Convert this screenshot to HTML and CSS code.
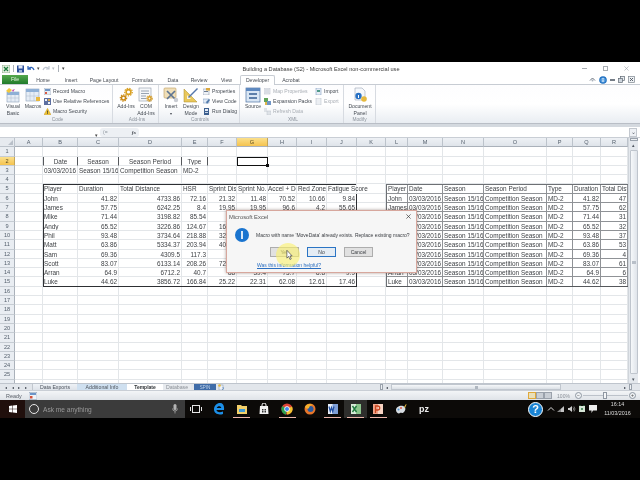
FILE: index.html
```html
<!DOCTYPE html>
<html lang="en">
<head>
<meta charset="utf-8">
<title>Building a Database (S2) - Microsoft Excel non-commercial use</title>
<link rel="stylesheet" href="styles.css">
</head>
<body>
<div class="screen">
  <div class="letterbox-top"></div>
  <div class="window">
    <div class="titlebar">
      <div class="qat">
        <svg class="ic8" viewBox="0 0 8 8"><rect width="8" height="8" fill="#e4efe0" stroke="#6f8f6a" stroke-width=".6"/><path d="M2 2l4 4M6 2L2 6" stroke="#1d7a3c" stroke-width="1.3"/></svg>
        <span class="qat-sep"></span>
        <svg class="ic8" viewBox="0 0 8 8"><rect width="7" height="7" y=".5" fill="#2c4f9a"/><rect x="1.5" y=".5" width="4" height="3" fill="#dfe6f4"/><rect x="2" y="5" width="3" height="2.5" fill="#9fb2d6"/></svg>
        <svg class="ic8" viewBox="0 0 8 8"><path d="M1 1v3h3M1.4 3.8C3 1.6 6 2 7 5" fill="none" stroke="#2d62b8" stroke-width="1.3"/></svg>
        <span class="qat-drop">▾</span>
        <svg class="ic8" viewBox="0 0 8 8"><path d="M7 1v3H4M6.6 3.8C5 1.6 2 2 1 5" fill="none" stroke="#bcc4cf" stroke-width="1.2"/></svg>
        <span class="qat-drop muted">▾</span>
        <span class="qat-sep"></span>
        <span class="qat-drop">▾</span>
      </div>
      <div class="doc-title">Building a Database (S2) - Microsoft Excel non-commercial use</div>
      <div class="win-controls">
        <span class="wc-min"></span>
        <span class="wc-max"></span>
        <svg class="wc-x" viewBox="0 0 6 6"><path d="M.5.5l5 5M5.5.5l-5 5" stroke="#9aa0a8" stroke-width=".7"/></svg>
      </div>
    </div>

    <div class="tabs">
      <div class="tab-file">File</div>
      <div class="tab w30">Home</div>
      <div class="tab w26">Insert</div>
      <div class="tab w40">Page Layout</div>
      <div class="tab w37">Formulas</div>
      <div class="tab w24">Data</div>
      <div class="tab w28">Review</div>
      <div class="tab w27">View</div>
      <div class="tab tab-active">Developer</div>
      <div class="tab w32">Acrobat</div>
      <div class="tab-tools">
        <svg class="ic7" viewBox="0 0 7 7"><path d="M1 4.5L3.5 2 6 4.5" fill="none" stroke="#6b7480" stroke-width="1"/><circle cx="3.5" cy="4.6" r="1" fill="#a9b1bb"/></svg>
        <svg class="ic8" viewBox="0 0 8 8"><circle cx="4" cy="4" r="3.8" fill="#1f6fc0"/><circle cx="4" cy="4" r="2.6" fill="#5aa0e0"/><rect x="3.5" y="3.4" width="1" height="2.6" fill="#fff"/><rect x="3.5" y="2" width="1" height="1" fill="#fff"/></svg>
        <span class="tool-min"></span>
        <svg class="ic7" viewBox="0 0 7 7"><rect x="2.5" y=".5" width="4" height="4" fill="#e8ecf0" stroke="#5f6873" stroke-width=".7"/><rect x=".5" y="2.5" width="4" height="4" fill="#cfd6de" stroke="#5f6873" stroke-width=".7"/></svg>
        <svg class="ic7" viewBox="0 0 7 7"><rect x=".5" y=".5" width="6" height="6" fill="#eef1f4" stroke="#7c858f" stroke-width=".7"/><path d="M2 2l3 3M5 2L2 5" stroke="#4f5761" stroke-width=".9"/></svg>
      </div>
    </div>

    <div class="ribbon">
      <section class="group g-code">
        <div class="group-body">
          <div class="large">
            <svg class="ic-l" viewBox="0 0 16 16"><rect x="2" y="5" width="12" height="10" fill="#e6edf6" stroke="#8ca0ba" stroke-width=".6"/><rect x="2" y="5" width="12" height="3" fill="#8fb0d6"/><path d="M6 8v7M10 8v7M2 11h12" stroke="#a9b8ca" stroke-width=".5"/><path d="M4 1l3 2-3 3-3-2z" fill="#f1c83e"/><path d="M7 3l3-1-2 3z" fill="#c24bb0"/></svg>
            <span>Visual<br>Basic</span>
          </div>
          <div class="large">
            <svg class="ic-l" viewBox="0 0 16 16"><rect x="1" y="2" width="13" height="12" fill="#e6edf6" stroke="#8ca0ba" stroke-width=".6"/><rect x="1" y="2" width="13" height="3" fill="#8fb0d6"/><path d="M5 5v9M9 5v9M1 9h13" stroke="#a9b8ca" stroke-width=".5"/><path d="M11 10h4v4h-4z" fill="#e9b83c"/></svg>
            <span>Macros</span>
          </div>
          <div class="small-col">
            <div class="small"><svg class="ic7" viewBox="0 0 7 7"><rect width="7" height="7" fill="#e9eef5" stroke="#8596ad" stroke-width=".5"/><rect x="1" y="1" width="5" height="2" fill="#6f94c4"/><rect x="1" y="4" width="2" height="2" fill="#d85a44"/></svg><span>Record Macro</span></div>
            <div class="small"><svg class="ic7" viewBox="0 0 7 7"><rect width="7" height="7" fill="#5d6fa0"/><path d="M1 1h2v2H1zM4 4h2v2H4z" fill="#f0f3f8"/><path d="M4 1h2v2H4z" fill="#d9a54a"/></svg><span>Use Relative References</span></div>
            <div class="small"><svg class="ic7" viewBox="0 0 7 7"><path d="M3.5.3L7 6.8H0z" fill="#f0c32f" stroke="#b98b14" stroke-width=".4"/><rect x="3.1" y="2.6" width=".8" height="2.2" fill="#333"/><rect x="3.1" y="5.2" width=".8" height=".8" fill="#333"/></svg><span>Macro Security</span></div>
          </div>
        </div>
        <div class="group-label">Code</div>
      </section>

      <section class="group g-addins">
        <div class="group-body">
          <div class="large">
            <svg class="ic-l" viewBox="0 0 16 16"><circle cx="10.5" cy="5" r="2.4" fill="none" stroke="#d9a021" stroke-width="1.6"/><circle cx="10.5" cy="5" r="3.8" fill="none" stroke="#d9a021" stroke-width="1.2" stroke-dasharray="1.4 1.2"/><circle cx="5.5" cy="11" r="2" fill="none" stroke="#c8860f" stroke-width="1.5"/><circle cx="5.500" cy="11" r="3.2" fill="none" stroke="#c8860f" stroke-width="1.100" stroke-dasharray="1.300 1.100"/></svg>
            <span>Add-Ins</span>
          </div>
          <div class="large">
            <svg class="ic-l" viewBox="0 0 16 16"><rect x="1" y="1" width="12" height="13" fill="#f5f7fa" stroke="#8e99a8" stroke-width=".6"/><path d="M3 4h8M3 6.5h8M3 9h5M3 11.5h5" stroke="#7f8da0" stroke-width=".8"/><circle cx="11.5" cy="11.5" r="1.700" fill="none" stroke="#d79a1c" stroke-width="1.400"/><circle cx="11.500" cy="11.500" r="3" fill="none" stroke="#d79a1c" stroke-width="1" stroke-dasharray="1.200 1"/></svg>
            <span>COM<br>Add-Ins</span>
          </div>
        </div>
        <div class="group-label">Add-Ins</div>
      </section>

      <section class="group g-controls">
        <div class="group-body">
          <div class="large">
            <svg class="ic-l" viewBox="0 0 16 16"><rect x="1" y="1" width="12" height="10" rx="1" fill="#f0dfb8" stroke="#bd9c5c" stroke-width=".6"/><path d="M4 12l8-8M12 12L4 4" stroke="#5e7592" stroke-width="1.7"/><circle cx="13" cy="13" r="2.2" fill="#c9ccd2"/></svg>
            <span>Insert<br><small>▾</small></span>
          </div>
          <div class="large">
            <svg class="ic-l" viewBox="0 0 16 16"><path d="M1 15V2l13 13z" fill="#e9c75a" stroke="#a98a2a" stroke-width=".5"/><path d="M4 12V8l4 4z" fill="#f7f3e4"/><path d="M5 10L14 1l1 1-9 9z" fill="#5577aa"/></svg>
            <span>Design<br>Mode</span>
          </div>
          <div class="small-col">
            <div class="small"><svg class="ic7" viewBox="0 0 7 7"><rect y="1" width="6" height="6" fill="#eef1f6" stroke="#7e8da3" stroke-width=".5"/><rect x="1" y="3" width="4" height="1" fill="#6a7b92"/><path d="M3 0h4v2.500H3z" fill="#d9a63c"/></svg><span>Properties</span></div>
            <div class="small"><svg class="ic7" viewBox="0 0 7 7"><rect y="1" width="6" height="4" fill="#dfe9f5" stroke="#6f8fb8" stroke-width=".5"/><path d="M3 4l3-3 1 1-3 4z" fill="#4f78aa"/></svg><span>View Code</span></div>
            <div class="small"><svg class="ic7" viewBox="0 0 7 7"><rect x="1" width="5" height="7" fill="#3c5f8f"/><rect x="2" y="1" width="3" height="2" fill="#e4ecf6"/><rect x="2" y="4" width="3" height="1" fill="#c7d5e6"/></svg><span>Run Dialog</span></div>
          </div>
        </div>
        <div class="group-label">Controls</div>
      </section>

      <section class="group g-xml">
        <div class="group-body">
          <div class="large">
            <svg class="ic-l" viewBox="0 0 16 16"><rect x="1" y="1" width="14" height="14" fill="#d9e6f4" stroke="#4f73a3" stroke-width=".7"/><rect x="1" y="1" width="14" height="3" fill="#5d88bf"/><rect x="4" y="6" width="8" height="2" fill="#5d7faa"/><rect x="4" y="10" width="8" height="2" fill="#5d7faa"/></svg>
            <span>Source</span>
          </div>
          <div class="small-col col-xml">
            <div class="small off"><svg class="ic7" viewBox="0 0 7 7"><rect width="6" height="6" fill="#e6e9ee" stroke="#b6bdc7" stroke-width=".5"/><path d="M1 2h4M1 4h4" stroke="#bcc3cc" stroke-width=".6"/></svg><span>Map Properties</span></div>
            <div class="small"><svg class="ic7" viewBox="0 0 7 7"><rect width="4" height="4" fill="#5fa35a"/><rect x="3" y="3" width="4" height="4" fill="#6f95c6"/><rect x="1" y="4" width="2" height="3" fill="#e0b64a"/></svg><span>Expansion Packs</span></div>
            <div class="small off"><svg class="ic7" viewBox="0 0 7 7"><path d="M0 1h3M0 3h3" stroke="#b9c0c9" stroke-width=".8"/><rect x="3" y="3" width="4" height="4" fill="#dfe3e8" stroke="#bac1ca" stroke-width=".5"/></svg><span>Refresh Data</span></div>
          </div>
          <div class="small-col">
            <div class="small"><svg class="ic7" viewBox="0 0 7 7"><rect x="1" width="5" height="7" fill="#e8eef6" stroke="#6f8fb8" stroke-width=".5"/><path d="M2 2h3v2H2z" fill="#4f9a8a"/></svg><span>Import</span></div>
            <div class="small off"><svg class="ic7" viewBox="0 0 7 7"><rect x="1" width="5" height="7" fill="#eceff3" stroke="#b5bcc6" stroke-width=".5"/></svg><span>Export</span></div>
          </div>
        </div>
        <div class="group-label">XML</div>
      </section>

      <section class="group g-modify">
        <div class="group-body">
          <div class="large">
            <svg class="ic-l" viewBox="0 0 16 16"><path d="M3 1h7l3 3v9H3z" fill="#f6f8fb" stroke="#9aa5b5" stroke-width=".6"/><circle cx="6.500" cy="9" r="3.200" fill="#2a72c4"/><rect x="6" y="8" width="1" height="3" fill="#fff"/><circle cx="12" cy="12" r="2.800" fill="#e6b93e"/></svg>
            <span>Document<br>Panel</span>
          </div>
        </div>
        <div class="group-label">Modify</div>
      </section>
    </div>

    <div class="ribbon-gap"></div>

    <div class="formula-bar">
      <div class="name-box"><span class="nb-drop">▾</span></div>
      <div class="fx-box"><span class="fx-paren">(=</span><span class="fx">fx</span></div>
      <div class="fb-expand">⌄</div>
    </div>

    <div class="sheet-area">
      <div class="sheet">
        <span class="corner"><svg class="corner-mark" viewBox="0 0 6 6"><path d="M6 0v6H0z" fill="#b9c0c9"/></svg></span><span class="h">A</span><span class="h">B</span><span class="h">C</span><span class="h">D</span><span class="h">E</span><span class="h">F</span><span class="h sel">G</span><span class="h">H</span><span class="h">I</span><span class="h">J</span><span class="h">K</span><span class="h">L</span><span class="h">M</span><span class="h">N</span><span class="h">O</span><span class="h">P</span><span class="h">Q</span><span class="h">R</span>

        <span class="rh">1</span><span></span><span></span><span></span><span></span><span></span><span></span><span></span><span></span><span></span><span></span><span></span><span></span><span></span><span></span><span></span><span></span><span></span><span></span>

        <span class="rh sel">2</span><span></span><span class="ctr bl br">Date</span><span class="ctr br">Season</span><span class="ctr br">Season Period</span><span class="ctr br">Type</span><span></span><span></span><span></span><span></span><span></span><span></span><span></span><span></span><span></span><span></span><span></span><span></span><span></span>

        <span class="rh">3</span><span></span><span>03/03/2016</span><span>Season 15/16</span><span>Competition Season</span><span>MD-2</span><span></span><span></span><span></span><span></span><span></span><span></span><span></span><span></span><span></span><span></span><span></span><span></span><span></span>

        <span class="rh">4</span><span></span><span></span><span></span><span></span><span></span><span></span><span></span><span></span><span></span><span></span><span></span><span></span><span></span><span></span><span></span><span></span><span></span><span></span>

        <span class="rh">5</span><span></span><span>Player</span><span>Duration</span><span>Total Distance</span><span>HSR</span><span>Sprint Dis</span><span>Sprint No.</span><span class="tight">Accel + De</span><span>Red Zone</span><span class="spill">Fatigue Score</span><span></span><span class="t tl">Player</span><span class="t">Date</span><span class="t">Season</span><span class="t">Season Period</span><span class="t">Type</span><span class="t">Duration</span><span class="t">Total Dist</span>

        <span class="rh">6</span><span></span><span>John</span><span class="n">41.82</span><span class="n">4733.86</span><span class="n">72.16</span><span class="n">21.32</span><span class="n">11.48</span><span class="n">70.52</span><span class="n">10.66</span><span class="n">9.84</span><span></span><span class="t tl">John</span><span class="t n">03/03/2016</span><span class="t">Season 15/16</span><span class="t">Competition Season</span><span class="t">MD-2</span><span class="t n">41.82</span><span class="t n">47</span>

        <span class="rh">7</span><span></span><span>James</span><span class="n">57.75</span><span class="n">6242.25</span><span class="n">8.4</span><span class="n">19.95</span><span class="n">19.95</span><span class="n">96.6</span><span class="n">4.2</span><span class="n">55.65</span><span></span><span class="t tl">James</span><span class="t n">03/03/2016</span><span class="t">Season 15/16</span><span class="t">Competition Season</span><span class="t">MD-2</span><span class="t n">57.75</span><span class="t n">62</span>

        <span class="rh">8</span><span></span><span>Mike</span><span class="n">71.44</span><span class="n">3198.82</span><span class="n">85.54</span><span></span><span></span><span></span><span></span><span></span><span></span><span class="t tl">Mike</span><span class="t n">03/03/2016</span><span class="t">Season 15/16</span><span class="t">Competition Season</span><span class="t">MD-2</span><span class="t n">71.44</span><span class="t n">31</span>

        <span class="rh">9</span><span></span><span>Andy</span><span class="n">65.52</span><span class="n">3226.86</span><span class="n">124.67</span><span class="n">16.42</span><span></span><span></span><span></span><span></span><span></span><span class="t tl">Andy</span><span class="t n">03/03/2016</span><span class="t">Season 15/16</span><span class="t">Competition Season</span><span class="t">MD-2</span><span class="t n">65.52</span><span class="t n">32</span>

        <span class="rh">10</span><span></span><span>Phil</span><span class="n">93.48</span><span class="n">3734.64</span><span class="n">218.88</span><span class="n">32.85</span><span></span><span></span><span></span><span></span><span></span><span class="t tl">Phil</span><span class="t n">03/03/2016</span><span class="t">Season 15/16</span><span class="t">Competition Season</span><span class="t">MD-2</span><span class="t n">93.48</span><span class="t n">37</span>

        <span class="rh">11</span><span></span><span>Matt</span><span class="n">63.86</span><span class="n">5334.37</span><span class="n">203.94</span><span class="n">40.78</span><span></span><span></span><span></span><span></span><span></span><span class="t tl">Matt</span><span class="t n">03/03/2016</span><span class="t">Season 15/16</span><span class="t">Competition Season</span><span class="t">MD-2</span><span class="t n">63.86</span><span class="t n">53</span>

        <span class="rh">12</span><span></span><span>Sam</span><span class="n">69.36</span><span class="n">4309.5</span><span class="n">117.3</span><span></span><span></span><span></span><span></span><span></span><span></span><span class="t tl">Sam</span><span class="t n">03/03/2016</span><span class="t">Season 15/16</span><span class="t">Competition Season</span><span class="t">MD-2</span><span class="t n">69.36</span><span class="t n">4</span>

        <span class="rh">13</span><span></span><span>Scott</span><span class="n">83.07</span><span class="n">6133.14</span><span class="n">208.26</span><span class="n">72.45</span><span></span><span></span><span></span><span></span><span></span><span class="t tl">Scott</span><span class="t n">03/03/2016</span><span class="t">Season 15/16</span><span class="t">Competition Season</span><span class="t">MD-2</span><span class="t n">83.07</span><span class="t n">61</span>

        <span class="rh">14</span><span></span><span>Arran</span><span class="n">64.9</span><span class="n">6712.2</span><span class="n">40.7</span><span class="n">88</span><span class="n">39.4</span><span class="n">73.7</span><span class="n">8.8</span><span class="n">9.9</span><span></span><span class="t tl">Arran</span><span class="t n">03/03/2016</span><span class="t">Season 15/16</span><span class="t">Competition Season</span><span class="t">MD-2</span><span class="t n">64.9</span><span class="t n">6</span>

        <span class="rh">15</span><span></span><span>Luke</span><span class="n">44.62</span><span class="n">3856.72</span><span class="n">166.84</span><span class="n">25.22</span><span class="n">22.31</span><span class="n">62.08</span><span class="n">12.61</span><span class="n">17.46</span><span></span><span class="t tl">Luke</span><span class="t n">03/03/2016</span><span class="t">Season 15/16</span><span class="t">Competition Season</span><span class="t">MD-2</span><span class="t n">44.62</span><span class="t n">38</span>

        <span class="rh">16</span><span></span><span></span><span></span><span></span><span></span><span></span><span></span><span></span><span></span><span></span><span></span><span></span><span></span><span></span><span></span><span></span><span></span><span></span>
        <span class="rh">17</span><span></span><span></span><span></span><span></span><span></span><span></span><span></span><span></span><span></span><span></span><span></span><span></span><span></span><span></span><span></span><span></span><span></span><span></span>
        <span class="rh">18</span><span></span><span></span><span></span><span></span><span></span><span></span><span></span><span></span><span></span><span></span><span></span><span></span><span></span><span></span><span></span><span></span><span></span><span></span>
        <span class="rh">19</span><span></span><span></span><span></span><span></span><span></span><span></span><span></span><span></span><span></span><span></span><span></span><span></span><span></span><span></span><span></span><span></span><span></span><span></span>
        <span class="rh">20</span><span></span><span></span><span></span><span></span><span></span><span></span><span></span><span></span><span></span><span></span><span></span><span></span><span></span><span></span><span></span><span></span><span></span><span></span>
        <span class="rh">21</span><span></span><span></span><span></span><span></span><span></span><span></span><span></span><span></span><span></span><span></span><span></span><span></span><span></span><span></span><span></span><span></span><span></span><span></span>
        <span class="rh">22</span><span></span><span></span><span></span><span></span><span></span><span></span><span></span><span></span><span></span><span></span><span></span><span></span><span></span><span></span><span></span><span></span><span></span><span></span>
        <span class="rh">23</span><span></span><span></span><span></span><span></span><span></span><span></span><span></span><span></span><span></span><span></span><span></span><span></span><span></span><span></span><span></span><span></span><span></span><span></span>
        <span class="rh">24</span><span></span><span></span><span></span><span></span><span></span><span></span><span></span><span></span><span></span><span></span><span></span><span></span><span></span><span></span><span></span><span></span><span></span><span></span>
        <span class="rh">25</span><span></span><span></span><span></span><span></span><span></span><span></span><span></span><span></span><span></span><span></span><span></span><span></span><span></span><span></span><span></span><span></span><span></span><span></span>
        <span class="rh"></span><span></span><span></span><span></span><span></span><span></span><span></span><span></span><span></span><span></span><span></span><span></span><span></span><span></span><span></span><span></span><span></span><span></span><span></span>

        <div class="box-left"></div>
        <div class="box-right"></div>
        <div class="selected"><span class="handle"></span></div>
      </div>
      <div class="vscroll">
        <span class="split-v"></span>
        <span class="arrow">▴</span>
        <span class="v-thumb"><span class="grip"></span></span>
        <span class="arrow">▾</span>
      </div>
    </div>

    <div class="sheet-tabs">
      <div class="tab-nav"><span>◂</span><span>◂</span><span>▸</span><span>▸</span></div>
      <div class="stab s1">Data Exports</div>
      <div class="stab s2">Additional Info</div>
      <div class="stab s3">Template</div>
      <div class="stab s4">Database</div>
      <div class="stab s5">SPIN</div>
      <svg class="ic7 new-sheet" viewBox="0 0 7 7"><rect x="1" y="1" width="4" height="5" fill="#eef2f7" stroke="#7f93ad" stroke-width=".5"/><circle cx="1.500" cy="1.500" r="1.300" fill="#e6b93e"/><path d="M5 3a2 2 0 0 1-1 3" fill="none" stroke="#5a86bd" stroke-width=".8"/></svg>
      <div class="hscroll">
        <span class="split-h"></span>
        <span class="arrow-h">◂</span>
        <span class="h-thumb"><span class="grip-h"></span></span>
        <span class="arrow-h">▸</span>
        <span class="split-h"></span>
      </div>
    </div>

    <div class="status">
      <span class="ready">Ready</span>
      <svg class="macro-rec" viewBox="0 0 8 8"><rect width="8" height="7" y=".5" fill="#eef2f7" stroke="#7f93ad" stroke-width=".5"/><rect x="1" y="1" width="6" height="2" fill="#6d95c8"/><rect x="1" y="4" width="2.500" height="2.500" fill="#d2533d"/></svg>
      <div class="status-right">
        <span class="view view-on"></span>
        <span class="view"></span>
        <span class="view"></span>
        <span class="zoom-pct">100%</span>
        <span class="zoom-btn">−</span>
        <span class="slider"><span class="slider-thumb"></span></span>
        <span class="zoom-btn">+</span>
      </div>
    </div>
  </div>

  <div class="taskbar">
    <div class="start">
      <svg class="win-logo" viewBox="0 0 8 8"><path d="M0 1l3.500-.5v3.200H0zM4 .4L8 0v3.700H4zM0 4.200h3.500v3.200L0 7zM4 4.200h4V8l-4-.5z" fill="#fff"/></svg>
    </div>
    <div class="search">
      <span class="cortana"></span>
      <span class="search-text">Ask me anything</span>
      <svg class="mic" viewBox="0 0 6 10"><rect x="1.500" width="3" height="6" rx="1.500" fill="#b4b4b4"/><path d="M.5 4.500a2.500 2.500 0 0 0 5 0M3 7v2.500" fill="none" stroke="#b4b4b4" stroke-width=".7"/></svg>
    </div>
    <div class="task">
      <svg class="t-ic" viewBox="0 0 12 12"><rect x="2.500" y="2.500" width="7" height="7" fill="none" stroke="#e6e6e6"/><path d="M.5 4v4M11.500 4v4" stroke="#e6e6e6"/></svg>
    </div>
    <div class="task">
      <svg class="t-ic" viewBox="0 0 12 12"><path d="M11 7H3.500c.2 2 3 3 6.500 1.500v2.400C5.500 12.500 1 10.500 1 6.500 1 2.500 4 0 7 0c3 0 4.500 2.500 4 7zM3.700 5h4.600C8 2.500 4.500 2.500 3.700 5z" fill="#1c8fe8"/></svg>
    </div>
    <div class="task on">
      <svg class="t-ic" viewBox="0 0 12 12"><path d="M1 2h4l1 1h5v8H1z" fill="#f3d06a"/><rect x="3" y="6" width="6" height="3" fill="#3f9ad6"/></svg>
    </div>
    <div class="task">
      <svg class="t-ic" viewBox="0 0 12 12"><path d="M2 3h8l.5 8h-9z" fill="#f2f2f2"/><path d="M4 4V2a2 2 0 0 1 4 0v2" fill="none" stroke="#f2f2f2"/><path d="M4 6h1.500v1.500H4zM6.500 6H8v1.500H6.500zM4 8h1.500v1.500H4zM6.500 8H8v1.500H6.500z" fill="#333"/></svg>
    </div>
    <div class="task on">
      <svg class="t-ic" viewBox="0 0 12 12"><circle cx="6" cy="6" r="5.500" fill="#dc4437"/><path d="M6 6L11 3.500A5.500 5.500 0 0 1 6 11.500z" fill="#f3c531"/><path d="M6 6l-1 5.500A5.500 5.500 0 0 1 1.300 3z" fill="#2f9e4f"/><circle cx="6" cy="6" r="2.700" fill="#fff"/><circle cx="6" cy="6" r="2" fill="#3f85ee"/></svg>
    </div>
    <div class="task">
      <svg class="t-ic" viewBox="0 0 12 12"><circle cx="6" cy="6" r="5.500" fill="#e8762a"/><circle cx="6.500" cy="6" r="3" fill="#2a5a9e"/><path d="M1 4c1-3 5-4 8-2-2 0-4 1-4 3-1 1-3 1-4-1z" fill="#f4b02d"/></svg>
    </div>
    <div class="task on">
      <svg class="t-ic" viewBox="0 0 12 12"><rect x="1" y="1" width="10" height="10" fill="#e8eef8"/><rect x="5.500" y="1" width="5.500" height="10" fill="#7f9fd6"/><path d="M2 3.500l1.300 5 1.200-4 1.200 4 1.300-5" fill="none" stroke="#1f4ea3" stroke-width="1.200"/></svg>
    </div>
    <div class="task on active">
      <svg class="t-ic" viewBox="0 0 12 12"><rect x="1" y="1" width="10" height="10" fill="#d9ecd9"/><rect x="6" y="1" width="5" height="10" fill="#8cc58c"/><path d="M2.500 3l4 6M6.500 3l-4 6" stroke="#1f7a3e" stroke-width="1.400"/></svg>
    </div>
    <div class="task on">
      <svg class="t-ic" viewBox="0 0 12 12"><rect x="1" y="1" width="10" height="10" fill="#f0a58a"/><rect x="6" y="1" width="5" height="10" fill="#f7d3c2"/><path d="M3.500 10V3h2.200a2 2 0 0 1 0 4H3.500" fill="none" stroke="#c9451f" stroke-width="1.300"/></svg>
    </div>
    <div class="task">
      <svg class="t-ic" viewBox="0 0 12 12"><path d="M1 7c0-3 4-5 7-4s3 4 1 6-3 0-4 1-4 0-4-3z" fill="#d8dde2"/><circle cx="3.500" cy="6.500" r="1" fill="#4f97d6"/><circle cx="6" cy="5" r="1" fill="#dd5a4a"/><path d="M9 4l2-3 .5.500L10 5z" fill="#e3b53c"/></svg>
    </div>
    <div class="task pz">pz</div>
    <div class="tray">
      <span class="help">?</span>
      <svg class="t-small" viewBox="0 0 8 8"><path d="M1 5.500L4 2.500l3 3" fill="none" stroke="#d8d8d8"/></svg>
      <svg class="t-small" viewBox="0 0 8 8"><path d="M0 7l7-6v6z" fill="#8b8b8b"/><path d="M4 7V4l3-2.500V7z" fill="#c4c4c4"/></svg>
      <svg class="t-small" viewBox="0 0 8 8"><path d="M0 3h1.500L4 1v6L1.500 5H0z" fill="#d0d0d0"/><path d="M5 2.500a2 2 0 0 1 0 3M6 1.500a4 4 0 0 1 0 5" fill="none" stroke="#c0c0c0" stroke-width=".6"/></svg>
      <svg class="t-small" viewBox="0 0 8 8"><rect x="1" y="1" width="6" height="6" fill="#d7e6d7"/><path d="M2 1V0M6 1V0M3 4h2M4 3v2" stroke="#2e7a45"/></svg>
      <svg class="t-small" viewBox="0 0 8 8"><path d="M0 0h8v5.500H4L2.500 8V5.500H0z" fill="#eee"/></svg>
      <div class="clock">16:14<br>11/03/2016</div>
    </div>
  </div>

  <div class="dialog">
    <div class="dlg-title"><span>Microsoft Excel</span><svg class="dlg-x" viewBox="0 0 6 6"><path d="M.5.5l5 5M5.500.5l-5 5" stroke="#333" stroke-width=".8"/></svg></div>
    <div class="dlg-msg">
      <span class="info-ic"></span>
      <span class="dlg-text">Macro with name 'MoveData' already exists. Replace existing macro?</span>
    </div>
    <div class="dlg-btns">
      <span class="btn btn-yes">Yes</span>
      <span class="btn btn-no">No</span>
      <span class="btn">Cancel</span>
    </div>
    <div class="dlg-link">Was this information helpful?</div>
    <span class="spot"></span>
    <svg class="cursor" viewBox="0 0 8 12"><path d="M1 0v9l2-2 1.500 3.500 1.500-.6L4.500 6.500H7z" fill="#fff" stroke="#333" stroke-width=".7"/></svg>
  </div>
</div>
</body>
</html>
```

FILE: styles.css
```css
* { box-sizing: border-box; }
html, body { margin: 0; padding: 0; background: #000; }
body { font-family: "Liberation Sans", Arial, sans-serif; color: #3d3f44; }

.screen { position: relative; width: 640px; height: 480px; overflow: hidden; background: #000; display: flex; flex-direction: column; }
.letterbox-top { height: 62px; flex: none; }

.window { height: 338px; flex: none; background: #fff; display: flex; flex-direction: column; filter: blur(.3px); }

/* title bar */
.titlebar { height: 13px; flex: none; display: grid; grid-template-columns: 1fr auto 1fr; align-items: center; padding: 0 0 0 2px; background: #fff; }
.qat { display: flex; align-items: center; gap: 2px; }
.qat-sep { width: 1px; height: 7px; background: #aab0b8; margin: 0 1px; }
.qat-drop { font-size: 5px; color: #444; line-height: 1; }
.qat-drop.muted { color: #b9bec5; }
.ic8 { width: 8px; height: 8px; flex: none; }
.ic7 { width: 7px; height: 7px; flex: none; }
.doc-title { font-size: 5.6px; color: #3a3a3a; white-space: nowrap; }
.win-controls { display: flex; justify-content: flex-end; align-items: center; gap: 16px; padding-right: 11px; }
.wc-min { width: 5px; height: 1px; background: #a8adb3; }
.wc-max { width: 5px; height: 5px; border: 1px solid #a8adb3; }
.wc-x { width: 5px; height: 5px; }

/* tabs */
.tabs { height: 10px; flex: none; display: flex; align-items: stretch; font-size: 5.1px; padding-left: 2px; border-bottom: 1px solid #c7ccd3; color: #454a52; }
.tab-file { width: 26px; background: linear-gradient(#55a84d, #1f7a2a); color: #e9f5e6; text-align: center; line-height: 9px; }
.tab { text-align: center; line-height: 10px; white-space: nowrap; }
.w30 { width: 30px; } .w26 { width: 26px; } .w40 { width: 40px; } .w37 { width: 37px; }
.w24 { width: 24px; } .w28 { width: 28px; } .w27 { width: 27px; } .w32 { width: 32px; }
.tab-active { width: 35px; background: #fff; border: 1px solid #c7ccd3; border-bottom: 0; height: 10px; border-radius: 2px 2px 0 0; line-height: 9px; }
.tab-tools { margin-left: auto; display: flex; align-items: center; gap: 3px; padding-right: 5px; }
.tool-min { width: 5px; height: 2px; background: #fff; border: 1px solid #757d87; }

/* ribbon */
.ribbon { height: 39px; flex: none; display: flex; background: linear-gradient(#fdfdfe, #fff 50%, #e9edf2); border-bottom: 1px solid #b9bec6; font-size: 5.1px; color: #444a52; }
.group { display: flex; flex-direction: column; border-right: 1px solid #d7dbe1; height: 100%; }
.group-body { flex: 1; display: flex; min-height: 0; }
.group-label { height: 7px; flex: none; text-align: center; font-size: 4.8px; line-height: 7px; color: #8b929b; }
.g-code { width: 113px; padding-left: 3px; }
.g-addins { width: 46px; padding-left: 3px; }
.g-controls { width: 81px; padding-left: 2px; }
.g-xml { width: 104px; padding-left: 3px; }
.g-modify { width: 32px; }
.large { width: 20px; flex: none; display: flex; flex-direction: column; align-items: center; text-align: center; line-height: 7px; padding-top: 2px; }
.g-modify .large { width: 32px; }
.ic-l { width: 16px; height: 16px; flex: none; }
.large > span { white-space: nowrap; }
.large small { font-size: 4px; }
.small-col { display: flex; flex-direction: column; padding: 1px 0 0 1px; }
.g-controls .small-col { padding-left: 2px; }
.col-xml { width: 51px; flex: none; }
.small { height: 10px; display: flex; align-items: center; gap: 2px; white-space: nowrap; }
.off { color: #a9aeb5; }

.ribbon-gap { height: 3px; flex: none; background: #d4d9df; }

/* formula bar */
.formula-bar { height: 11px; flex: none; display: flex; align-items: center; background: #fff; border-bottom: 1px solid #c9ced5; }
.name-box { width: 100px; flex: none; text-align: right; padding-right: 2px; }
.nb-drop { font-size: 5px; color: #444; }
.fx-box { width: 39px; height: 9px; flex: none; display: flex; justify-content: space-between; align-items: center; background: #edf0f4; border-radius: 3px; font-size: 5px; padding: 0 3px 0 3px; color: #8d949d; }
.fx { font-family: "Liberation Serif", serif; font-style: italic; font-weight: bold; color: #3a3f46; }
.fb-expand { margin-left: auto; width: 8px; height: 9px; margin-right: 3px; font-size: 6px; line-height: 7px; text-align: center; color: #5a6069; background: #eef1f5; border: 1px solid #c3c8cf; }

/* sheet */
.sheet-area { height: 245px; flex: none; display: flex; }
.sheet { position: relative; width: 628px; flex: none; height: 100%; overflow: hidden; display: grid; grid-template-columns: 15px 28px 35px 41px 63px 26px 29px 31px 29px 30px 30px 29px 22px 35px 41px 63px 26px 28px 27px; grid-auto-rows: 9.3px; font-size: 6.4px; line-height: 9.3px; color: #3f4246; }
.sheet > span { border-right: 1px solid #e3e6e9; border-bottom: 1px solid #e3e6e9; padding: 0 1px; white-space: nowrap; overflow: hidden; }
.sheet > .tight { padding: 0; }
.sheet > .corner { background: #e6eaef; position: relative; border-color: #bcc3cb; }
.corner-mark { position: absolute; right: 1px; bottom: 1px; width: 5px; height: 5px; }
.sheet > .h { background: linear-gradient(#eef1f5, #dfe4ea); text-align: center; color: #55606d; border-right-color: #bcc3cb; border-bottom-color: #aab1ba; font-size: 5.6px; }
.sheet > .rh { background: #e9edf2; text-align: center; color: #55606d; border-right-color: #aab1ba; border-bottom-color: #c6ccd3; font-size: 5.6px; padding: 0; }
.sheet > .sel { background: linear-gradient(#fbe08c, #f5c34f); color: #5a4a20; border-right-color: #c3a558; }
.sheet > .n { text-align: right; }
.sheet > .ctr { text-align: center; }
.sheet > .bl { border-left: 1px solid #55585c; }
.sheet > .br { border-right: 1px solid #55585c; }
.sheet > .spill { overflow: visible; position: relative; z-index: 1; }
.sheet > .t { border-color: #8f9296; }
.sheet > .tl { border-left: 1px solid #6d7074; }
.box-left { position: absolute; grid-column: 3 / 12; grid-row: 6 / 17; inset: 0; border: 1.5px solid #2d2f33; pointer-events: none; }
.box-right { position: absolute; grid-column: 13 / 20; grid-row: 6 / 17; inset: 0; border-top: 1px solid #6d7074; border-left: 1px solid #6d7074; border-bottom: 1px solid #55585c; pointer-events: none; }
.selected { position: absolute; grid-column: 8 / 9; grid-row: 3 / 4; inset: 0; border: 1.5px solid #111; }
.handle { position: absolute; right: -2px; bottom: -2px; width: 3px; height: 3px; background: #111; }

.vscroll { width: 10px; flex: none; height: 100%; background: #e4e8ed; display: flex; flex-direction: column; align-items: center; border-left: 1px solid #d0d5db; }
.split-v { width: 8px; height: 3px; flex: none; background: #eef1f4; border: 1px solid #9aa2ac; }
.arrow { height: 8px; flex: none; font-size: 5px; line-height: 8px; color: #4f5660; }
.v-thumb { flex: 1; width: 8px; margin: 1px 0; background: linear-gradient(90deg, #f6f8fa, #dfe4ea); border: 1px solid #bfc5cd; display: flex; align-items: center; justify-content: center; border-radius: 1px; }
.grip { width: 4px; height: 3px; background: #b8bfc8; }

/* sheet tabs */
.sheet-tabs { height: 7px; flex: none; display: flex; align-items: stretch; background: #e2e6eb; font-size: 5.2px; line-height: 7px; color: #4c535c; border-top: 1px solid #bfc5cd; }
.tab-nav { width: 33px; flex: none; display: flex; justify-content: space-around; padding: 0 3px; font-size: 4px; color: #333a44; border-right: 1px solid #c2c7ce; }
.stab { white-space: nowrap; text-align: center; flex: none; }
.s1 { width: 44px; background: linear-gradient(#eef2f6, #dee3e9); }
.s2 { width: 50px; background: #cfe0f0; }
.s3 { width: 36px; background: #fff; color: #2e3236; font-weight: bold; font-size: 5px; }
.s4 { width: 28px; color: #8b9097; background: #e7eaee; }
.s5 { width: 22px; margin-left: 3px; background: #3f6ca8; color: #c3d5ea; font-size: 4.5px; }
.new-sheet { margin: 0 0 0 2px; align-self: center; }
.hscroll { margin-left: auto; width: 260px; flex: none; display: flex; align-items: stretch; padding-right: 3px; }
.split-h { width: 3px; flex: none; background: #eef1f4; border: 1px solid #9aa2ac; }
.arrow-h { width: 8px; flex: none; text-align: center; font-size: 4px; color: #333a44; }
.h-thumb { width: 170px; flex: none; background: linear-gradient(#f5f7f9, #dbe0e6); border: 1px solid #c0c6ce; display: flex; align-items: center; justify-content: center; margin-right: 60px; }
.grip-h { width: 3px; height: 3px; background: #b0b7c0; }

/* status bar */
.status { flex: 1; display: flex; align-items: center; background: linear-gradient(#f3f5f7, #dfe3e8); font-size: 5.4px; color: #5a6069; padding-left: 6px; border-top: 1px solid #c9ced5; }
.ready { width: 23px; flex: none; }
.macro-rec { width: 8px; height: 8px; flex: none; }
.status-right { margin-left: auto; display: flex; align-items: center; padding-right: 4px; }
.view { width: 8px; height: 7px; background: #c9ced5; border: 1px solid #9aa1ab; }
.view-on { background: #e9dfb9; border-color: #e0a93b; }
.zoom-pct { width: 23px; text-align: center; color: #8a9098; font-size: 5px; }
.zoom-btn { width: 7px; height: 7px; border-radius: 50%; background: #eef1f4; border: 1px solid #8f97a2; font-size: 5px; line-height: 5px; text-align: center; color: #444; }
.slider { width: 45px; height: 1px; background: #bcc2ca; position: relative; margin: 0 1px; }
.slider-thumb { position: absolute; left: 20px; top: -3px; width: 4px; height: 7px; background: #f4f6f8; border: 1px solid #8f97a2; }

/* taskbar */
.taskbar { height: 18px; flex: none; display: flex; align-items: stretch; background: #0c0a08; color: #ddd; filter: blur(.3px); }
.start { width: 25px; flex: none; background: #200f0c; display: flex; align-items: center; justify-content: center; }
.win-logo { width: 8px; height: 8px; }
.search { width: 159.6px; flex: none; background: #3b3b3b; display: flex; align-items: center; padding: 0 7px 0 4px; gap: 4px; }
.cortana { width: 10px; height: 10px; border: 1.5px solid #e8e8e8; border-radius: 50%; flex: none; }
.search-text { flex: 1; font-size: 6.6px; color: #999; }
.mic { width: 6px; height: 10px; flex: none; }
.task { width: 22.8px; flex: none; display: flex; align-items: center; justify-content: center; position: relative; }
.task.on::after { content: ""; position: absolute; left: 3px; right: 3px; bottom: 0; height: 1px; background: #eeb7ad; }
.task.active { background: #2e2e2c; }
.t-ic { width: 12px; height: 12px; }
.pz { font-size: 9px; font-weight: bold; color: #eee; }
.tray { margin-left: auto; display: flex; align-items: center; gap: 2.5px; padding-right: 8px; }
.help { width: 15px; height: 15px; border-radius: 50%; background: #1a84d4; border: 1px solid #fff; color: #fff; font-size: 11px; font-weight: bold; text-align: center; line-height: 13px; margin-right: 1px; }
.t-small { width: 8px; height: 8px; }
.clock { width: 29px; margin-left: 4px; text-align: center; font-size: 5.4px; line-height: 9px; color: #ddd; }

/* dialog */
.dialog { position: absolute; left: 226px; top: 210px; width: 191px; height: 63px; background: #f6f6f6; border: 1px solid #d7a79d; box-shadow: 0 0 3px rgba(90,60,50,.5); display: flex; flex-direction: column; font-size: 5px; color: #3a3d42; filter: blur(.3px); }
.dlg-title { height: 11px; flex: none; display: flex; justify-content: space-between; align-items: center; padding: 0 5px 0 2px; font-size: 5.8px; color: #555; }
.dlg-x { width: 5px; height: 5px; }
.dlg-msg { height: 25px; flex: none; display: flex; align-items: center; gap: 7px; padding-left: 8px; }
.info-ic { position: relative; width: 14px; height: 14px; border-radius: 50%; background: #1a74cf; flex: none; }
.info-ic::after { content: ""; position: absolute; left: 6px; top: 3px; width: 2px; height: 8px; background: #d8e8f8; }
.dlg-text { white-space: nowrap; }
.dlg-btns { display: flex; gap: 8px; padding-left: 43px; }
.btn { width: 29px; height: 10px; background: #e1e1e1; border: 1px solid #adadad; text-align: center; line-height: 8px; }
.btn-no { border-color: #2a74c4; background: #e4ecf4; }
.dlg-link { margin: 5px 0 0 30px; color: #2a6ec0; text-decoration: underline; font-size: 5px; }
.spot { position: absolute; left: 49px; top: 32px; width: 24px; height: 24px; border-radius: 50%; background: rgba(250, 240, 110, .62); }
.cursor { position: absolute; left: 59px; top: 39px; width: 7px; height: 11px; }
```
